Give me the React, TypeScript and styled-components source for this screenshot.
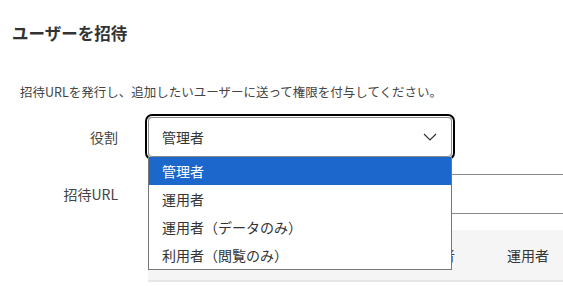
import React from 'react';
import styled, { createGlobalStyle } from 'styled-components';

const GlobalStyle = createGlobalStyle`
  body {
    margin: 0;
    background: #ffffff;
    font-family: "Noto Sans CJK JP", "Noto Sans", sans-serif;
    color: #333333;
    overflow: hidden;
  }
`;

let Page = styled.div`
  padding: 20px 0 0 12px;
  width: 760px;
`;

let Title = styled.h2`
  margin: 0;
  font-size: 16.5px;
  line-height: 26px;
  font-weight: bold;
  color: #333333;
`;

let Body = styled.div`
  margin: 36px 0 0 8px;
`;

let Description = styled.p`
  margin: 0;
  font-size: 12.5px;
  line-height: 20px;
  color: #444444;
`;

let Form = styled.div`
  margin-top: 15px;
  display: grid;
  grid-template-columns: 98px 1fr;
  column-gap: 30px;
  row-gap: 17px;
  align-items: center;
`;

let Label = styled.label`
  text-align: right;
  font-size: 14px;
  color: #444444;
`;

let SelectWrap = styled.div`
  position: relative;
  width: 304px;
`;

let SelectBox = styled.div`
  box-sizing: border-box;
  height: 40px;
  border: 1px solid #8a8a8a;
  border-radius: 4px;
  display: flex;
  align-items: center;
  justify-content: space-between;
  padding: 0 14px 0 13px;
  font-size: 14px;
  color: #333333;
  box-shadow: 0 0 0 1px #ffffff, 0 0 0 3px #000000;
`;

let Menu = styled.ul`
  position: absolute;
  top: 40px;
  left: 0;
  width: 304px;
  box-sizing: border-box;
  margin: 0;
  padding: 0;
  list-style: none;
  background: #ffffff;
  border: 1px solid #767676;
  border-top: none;
  z-index: 2;
`;

let Option = styled.li<{ $active?: boolean }>`
  height: 28px;
  line-height: 29px;
  padding-left: 13px;
  font-size: 14px;
  background: ${(p) => (p.$active ? '#1c67cb' : '#ffffff')};
  color: ${(p) => (p.$active ? '#ffffff' : '#333333')};
`;

let UrlInput = styled.div`
  box-sizing: border-box;
  height: 40px;
  width: 600px;
  border: 1px solid #8a8a8a;
  border-radius: 4px;
`;

let Table = styled.div`
  margin: 16px 0 0 128px;
  width: 600px;
`;

let HeadRow = styled.div`
  display: grid;
  grid-template-columns: 239px 94px 94px 94px;
  height: 50px;
  align-items: center;
  background: #f5f5f5;
  border-bottom: 2px solid #e6e6e6;
`;

let HeadCell = styled.div`
  font-size: 14px;
  color: #333333;
  text-align: center;
`;

const Chevron = () => (
  <svg width="14" height="8" viewBox="0 0 14 8">
    <polyline points="1,1 7,7 13,1" fill="none" stroke="#333" strokeWidth="1.2" />
  </svg>
);

const roles = ['管理者', '運用者', '運用者（データのみ）', '利用者（閲覧のみ）'];

const App: React.FC = () => {
  return (
    <>
      <GlobalStyle />
      <Page>
        <Title>ユーザーを招待</Title>
        <Body>
          <Description>
            招待URLを発行し、追加したいユーザーに送って権限を付与してください。
          </Description>
          <Form>
            <Label>役割</Label>
            <SelectWrap>
              <SelectBox>
                <span>管理者</span>
                <Chevron />
              </SelectBox>
              <Menu>
                {roles.map((r, i) => (
                  <Option key={r} $active={i === 0}>
                    {r}
                  </Option>
                ))}
              </Menu>
            </SelectWrap>
            <Label>招待URL</Label>
            <UrlInput />
          </Form>
          <Table>
            <HeadRow>
              <HeadCell />
              <HeadCell>管理者</HeadCell>
              <HeadCell>運用者</HeadCell>
              <HeadCell />
            </HeadRow>
          </Table>
        </Body>
      </Page>
    </>
  );
};

export default App;
